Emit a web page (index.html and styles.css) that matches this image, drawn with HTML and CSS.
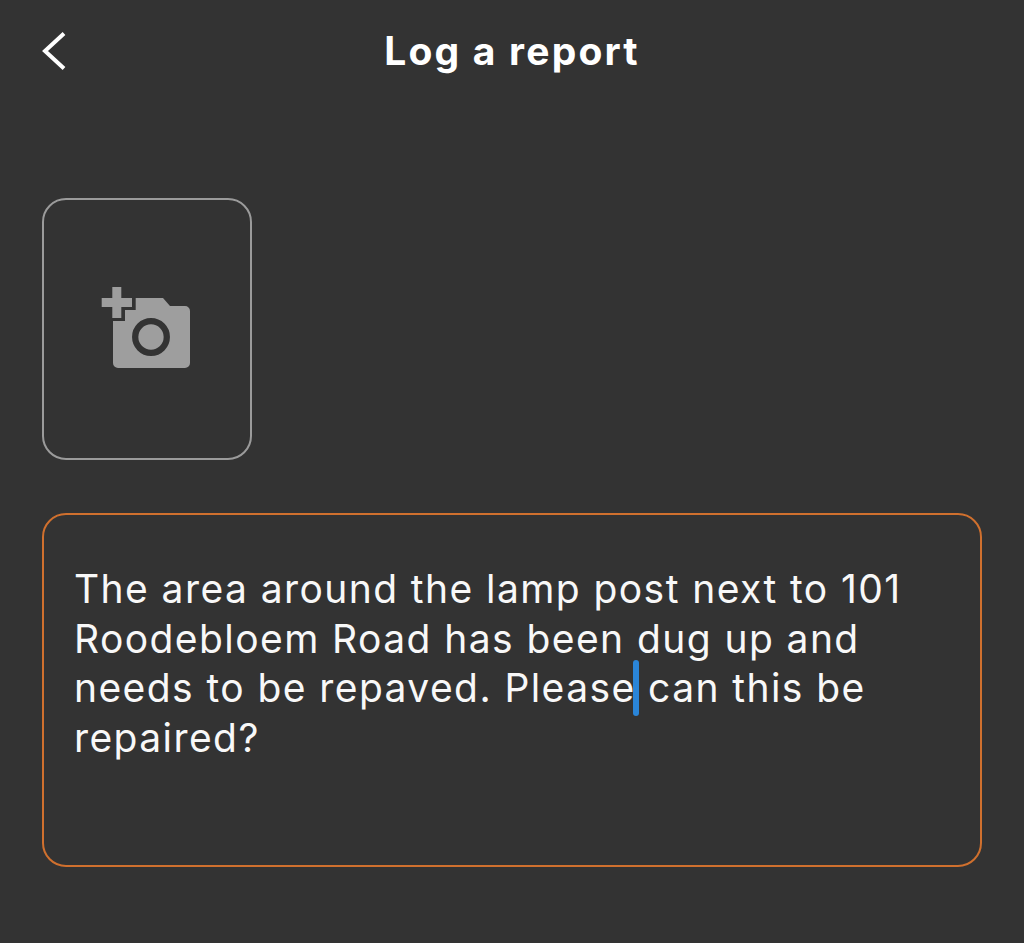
FILE: index.html
```html
<!DOCTYPE html>
<html lang="en">
<head>
    <meta charset="UTF-8">
    <meta name="viewport" content="width=device-width, initial-scale=1.0">
    <title>Log a report</title>
    <link rel="stylesheet" href="styles.css">
</head>
<body>

<div class="container">
    <!-- Top bar -->
    <div class="top-bar">
        <svg class="back-icon" viewBox="0 0 26 40" aria-label="Back">
            <path d="M22 2.5 L3 20 L22 37.5" />
        </svg>
        <h1>Log a report</h1>
    </div>

    <!-- Add photo tile -->
    <div class="photo-tile">
        <svg class="camera-icon" viewBox="0 0 94 86" aria-label="Add photo">
            <path d="M35.7 12 H63 L70 20 H85 a5 5 0 0 1 5 5 V77 a5 5 0 0 1 -5 5 H18 a5 5 0 0 1 -5 -5 V35 H25 V24 H35.7 Z" />
            <circle class="lens" cx="51" cy="51" r="15.8" />
            <rect x="1.7" y="12" width="30.3" height="9" />
            <rect x="12.3" y="1" width="9" height="31" />
        </svg>
    </div>

    <!-- Report text -->
    <div class="report-box">The area around the lamp post next to 101 Roodebloem Road has been dug up and needs to be repaved. Please<span class="caret"></span> can this be repaired?</div>
</div>

</body>
</html>
```

FILE: styles.css
```css
body {
    margin: 0;
    padding: 0;
    font-family: 'Inter', 'Liberation Sans', sans-serif;
    color: #fff;
    background-color: #333333;
}

.container {
    padding: 0 42px;
}

.top-bar {
    display: flex;
    justify-content: center;
    align-items: center;
    position: relative;
    height: 102px;
}

.top-bar h1 {
    margin: 0;
    font-size: 39px;
    font-weight: 700;
    line-height: 102px;
    letter-spacing: 2.2px;
}

.back-icon {
    position: absolute;
    left: 0;
    top: 31px;
    width: 26px;
    height: 40px;
}

.back-icon path {
    fill: none;
    stroke: #fff;
    stroke-width: 4;
}

.photo-tile {
    display: flex;
    justify-content: center;
    align-items: center;
    box-sizing: border-box;
    width: 210px;
    height: 262px;
    margin-top: 96px;
    border: 2.5px solid #9b9b9b;
    border-radius: 24px;
}

.camera-icon {
    width: 94px;
    height: 86px;
    fill: #9e9e9e;
}

.camera-icon .lens {
    fill: none;
    stroke: #333333;
    stroke-width: 6.3;
}

.report-box {
    box-sizing: border-box;
    height: 354px;
    margin-top: 53px;
    padding: 49px 30px 0;
    border: 2.5px solid #d0702e;
    border-radius: 24px;
    font-size: 39px;
    font-weight: 400;
    line-height: 49.5px;
    letter-spacing: 1.42px;
    color: #f8f8f8;
}

.caret {
    display: inline-block;
    position: relative;
    width: 0;
    height: 0;
}

.caret::after {
    content: "";
    position: absolute;
    left: -3px;
    top: -42px;
    width: 6px;
    height: 56px;
    border-radius: 3px;
    background-color: #2a85d8;
}
```
